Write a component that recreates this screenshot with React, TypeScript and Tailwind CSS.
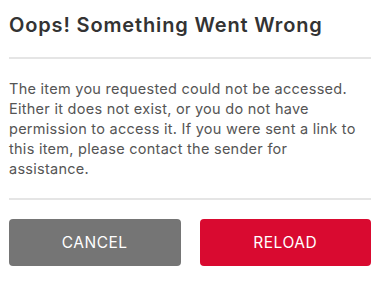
export default function App() {
  return (
    <div className="w-[378px] h-[281px] bg-white pl-[9px] pr-[7px] font-['Inter','Liberation_Sans',sans-serif]">
      <h1 className="pt-[13px] pb-[20px] text-[20px] leading-[24px] font-semibold tracking-[0.85px] text-[#333333]">
        Oops! Something Went Wrong
      </h1>
      <div className="h-[2px] bg-[#e5e5e5]" />
      <p className="pt-[20px] pb-[19px] text-[14.5px] leading-[20px] tracking-[0.27px] text-[#555555]">
        The item you requested could not be accessed. Either it does not exist, or you do not have permission to access it. If you were sent a link to this item, please contact the sender for assistance.
      </p>
      <div className="h-[2px] bg-[#e5e5e5]" />
      <div className="mt-[19px] flex gap-[19px]">
        <button className="flex-1 h-[47px] rounded-[4px] bg-[#757575] text-white text-[15.5px] font-normal tracking-[0.5px]">
          CANCEL
        </button>
        <button className="flex-1 h-[47px] rounded-[4px] bg-[#d90a30] text-white text-[15.5px] font-normal tracking-[0.5px]">
          RELOAD
        </button>
      </div>
    </div>
  );
}
